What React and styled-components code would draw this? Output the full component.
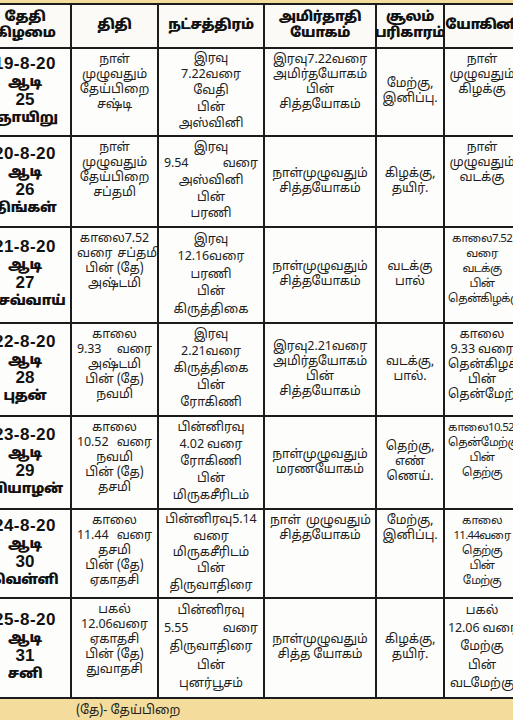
import React from "react";
import styled, { createGlobalStyle } from "styled-components";

const Global = createGlobalStyle`
  html, body { margin: 0; padding: 0; background: #f3dc9c; }
  #root { width: 513px; height: 720px; }
`;

const TAMIL = `"Noto Sans Tamil", "Lohit Tamil", "Noto Sans", "Liberation Sans", sans-serif`;

const Page = styled.div`
  width: 513px;
  height: 720px;
  overflow: hidden;
  background: #f3dc9c;
  display: flex;
  flex-direction: column;
  padding-top: 3px;
  box-sizing: border-box;
  font-family: ${TAMIL};
  color: #1e1e1e;
`;

const Table = styled.div`
  display: grid;
  grid-template-columns: 90px 85px 104px 110px 66px 74px;
  grid-template-rows: 42px 86px 89px 94px 91px 91px 87px 98px;
  gap: 2px;
  background: #1c1c1c;
  border-top: 2px solid #1c1c1c;
  border-bottom: 2px solid #1c1c1c;
  margin-left: -22px;
  width: max-content;
  padding: 0 2px;
`;

const HeadCell = styled.div`
  background: #fbfaf6;
  display: flex;
  flex-direction: column;
  align-items: center;
  justify-content: center;
  font-weight: 900;
  font-size: 13.5px;
  line-height: 16px;
  color: #111;
  text-align: center;
  letter-spacing: ${(p) => (p.$tight ? "-0.8px" : "-0.3px")};
  white-space: nowrap;
`;

const Cell = styled.div`
  background: #fdfdfb;
  display: flex;
  flex-direction: column;
  align-items: stretch;
  justify-content: ${(p) => (p.$valign === "top" ? "flex-start" : p.$valign === "fill" ? "space-evenly" : "center")};
  padding: ${(p) => (p.$valign === "top" ? "4px 3px 2px" : "2px 3px")};
  font-size: ${(p) => (p.$small ? "11.5px" : "12.5px")};
  line-height: 15px;
  letter-spacing: ${(p) => (p.$small ? "-0.7px" : "-0.1px")};
  text-align: center;
  overflow: hidden;
  white-space: nowrap;
`;

const Line = styled.div`
  display: flex;
  justify-content: ${(p) => (p.$spread ? "space-between" : "safe center")};
  gap: 5px;
  padding: ${(p) => (p.$spread ? "0 2px" : "0")};
`;

const DateCell = styled.div`
  background: #fdfdfb;
  display: flex;
  flex-direction: column;
  align-items: center;
  justify-content: center;
  color: #111;
  white-space: nowrap;
`;

const DateNum = styled.div`
  font-family: "Liberation Sans", Arial, sans-serif;
  font-weight: 700;
  font-size: 17px;
  letter-spacing: 0.5px;
  line-height: 20px;
  margin-bottom: 1px;
`;

const Month = styled.div`
  font-weight: 900;
  font-size: 14px;
  line-height: 16px;
`;

const DayNum = styled.div`
  font-family: "Liberation Sans", Arial, sans-serif;
  font-weight: 700;
  font-size: 17px;
  line-height: 17px;
`;

const WeekDay = styled.div`
  font-weight: 900;
  font-size: 13.5px;
  line-height: 22px;
  letter-spacing: -0.3px;
`;

const Footer = styled.div`
  padding: 4px 0 0 76px;
  font-size: 12.5px;
  color: #222;
`;

const S = (t) => ({ t, spread: true });

const rows = [
  {
    date: "19-8-20", day: "25", week: "ஞாயிறு",
    tithi: ["நாள்", "முழுவதும்", "தேய்பிறை", "சஷ்டி"],
    star: ["இரவு", "7.22வரை", "வேதி", "பின்", "அஸ்வினி"],
    yogam: ["இரவு7.22வரை", "அமிர்தயோகம்", "பின்", "சித்தயோகம்"],
    soolam: ["மேற்கு,", "இனிப்பு."],
    yogini: ["நாள்", "முழுவதும்", "கிழக்கு"],
    yoginiAlign: "top", yogamAlign: "top",
  },
  {
    date: "20-8-20", day: "26", week: "திங்கள்",
    tithi: ["நாள்", "முழுவதும்", "தேய்பிறை", "சப்தமி"],
    star: ["இரவு", S("9.54 வரை"), "அஸ்வினி", "பின்", "பரணி"],
    yogam: ["நாள்முழுவதும்", "சித்தயோகம்"],
    soolam: ["கிழக்கு,", "தயிர்."],
    yogini: ["நாள்", "முழுவதும்", "வடக்கு"],
    yoginiAlign: "top",
  },
  {
    date: "21-8-20", day: "27", week: "செவ்வாய்",
    tithi: ["காலை7.52", S("வரை சப்தமி"), "பின் (தே)", "அஷ்டமி"],
    star: ["இரவு", "12.16வரை", "பரணி", "பின்", "கிருத்திகை"],
    yogam: ["நாள்முழுவதும்", "சித்தயோகம்"],
    soolam: ["வடக்கு", "பால்"],
    yogini: ["காலை7.52", "வரை", "வடக்கு", "பின்", "தென்கிழக்கு"],
    yoginiSmall: true, yoginiAlign: "top",
  },
  {
    date: "22-8-20", day: "28", week: "புதன்",
    tithi: ["காலை", S("9.33 வரை"), "அஷ்டமி", "பின் (தே)", "நவமி"],
    star: ["இரவு", "2.21வரை", "கிருத்திகை", "பின்", "ரோகிணி"],
    yogam: ["இரவு2.21வரை", "அமிர்தயோகம்", "பின்", "சித்தயோகம்"],
    soolam: ["வடக்கு,", "பால்."],
    yogini: ["காலை", "9.33 வரை", "தென்கிழக்கு", "பின்", "தென்மேற்கு"],
    yoginiAlign: "top",
  },
  {
    date: "23-8-20", day: "29", week: "வியாழன்",
    tithi: ["காலை", S("10.52 வரை"), "நவமி", "பின் (தே)", "தசமி"],
    star: ["பின்னிரவு", "4.02 வரை", "ரோகிணி", "பின்", "மிருகசீரிடம்"],
    yogam: ["நாள்முழுவதும்", "மரணயோகம்"],
    soolam: ["தெற்கு,", "எண்", "ணெய்."],
    yogini: ["காலை10.52வரை", "தென்மேற்கு", "பின்", "தெற்கு"],
    yoginiSmall: true, yoginiAlign: "top",
  },
  {
    date: "24-8-20", day: "30", week: "வெள்ளி",
    tithi: ["காலை", S("11.44 வரை"), "தசமி", "பின் (தே)", "ஏகாதசி"],
    star: ["பின்னிரவு5.14", "வரை", "மிருகசீரிடம்", "பின்", "திருவாதிரை"],
    yogam: [S("நாள் முழுவதும்"), "சித்தயோகம்"],
    soolam: ["மேற்கு,", "இனிப்பு."],
    yogini: ["காலை", "11.44வரை", "தெற்கு", "பின்", "மேற்கு"],
    yoginiSmall: true, yoginiAlign: "top", yogamAlign: "top", soolamAlign: "top",
  },
  {
    date: "25-8-20", day: "31", week: "சனி",
    tithi: ["பகல்", "12.06வரை", "ஏகாதசி", "பின் (தே)", "துவாதசி"],
    star: ["பின்னிரவு", S("5.55 வரை"), "திருவாதிரை", "பின்", "புனர்பூசம்"],
    yogam: ["நாள்முழுவதும்", "சித்த யோகம்"],
    soolam: ["கிழக்கு,", "தயிர்."],
    yogini: ["பகல்", "12.06 வரை", "மேற்கு", "பின்", "வடமேற்கு"],
    yoginiAlign: "fill",
  },
];

const Lines = ({ items }) =>
  items.map((it, i) =>
    typeof it === "string" ? (
      <Line key={i}>{it}</Line>
    ) : (
      <Line key={i} $spread>
        {it.t.split(" ").map((w, j) => (
          <span key={j}>{w}</span>
        ))}
      </Line>
    )
  );

const headers = [
  ["தேதி", "கிழமை"],
  ["திதி"],
  ["நட்சத்திரம்"],
  ["அமிர்தாதி", "யோகம்"],
  ["சூலம்", "பரிகாரம்"],
  ["யோகினி"],
];

export default function App() {
  return (
    <>
      <Global />
      <Page>
        <Table>
          {headers.map((h, i) => (
            <HeadCell key={i} $tight={i === 5}>
              {h.map((t, j) => (
                <div key={j}>{t}</div>
              ))}
            </HeadCell>
          ))}
          {rows.map((r, i) => (
            <React.Fragment key={i}>
              <DateCell>
                <DateNum>{r.date}</DateNum>
                <Month>ஆடி</Month>
                <DayNum>{r.day}</DayNum>
                <WeekDay>{r.week}</WeekDay>
              </DateCell>
              <Cell $valign="top">
                <Lines items={r.tithi} />
              </Cell>
              <Cell $valign="fill">
                <Lines items={r.star} />
              </Cell>
              <Cell $valign={r.yogamAlign || "center"}>
                <Lines items={r.yogam} />
              </Cell>
              <Cell $valign={r.soolamAlign || "center"}>
                <Lines items={r.soolam} />
              </Cell>
              <Cell $valign={r.yoginiAlign} $small={r.yoginiSmall}>
                <Lines items={r.yogini} />
              </Cell>
            </React.Fragment>
          ))}
        </Table>
        <Footer>(தே)- தேய்பிறை</Footer>
      </Page>
    </>
  );
}
